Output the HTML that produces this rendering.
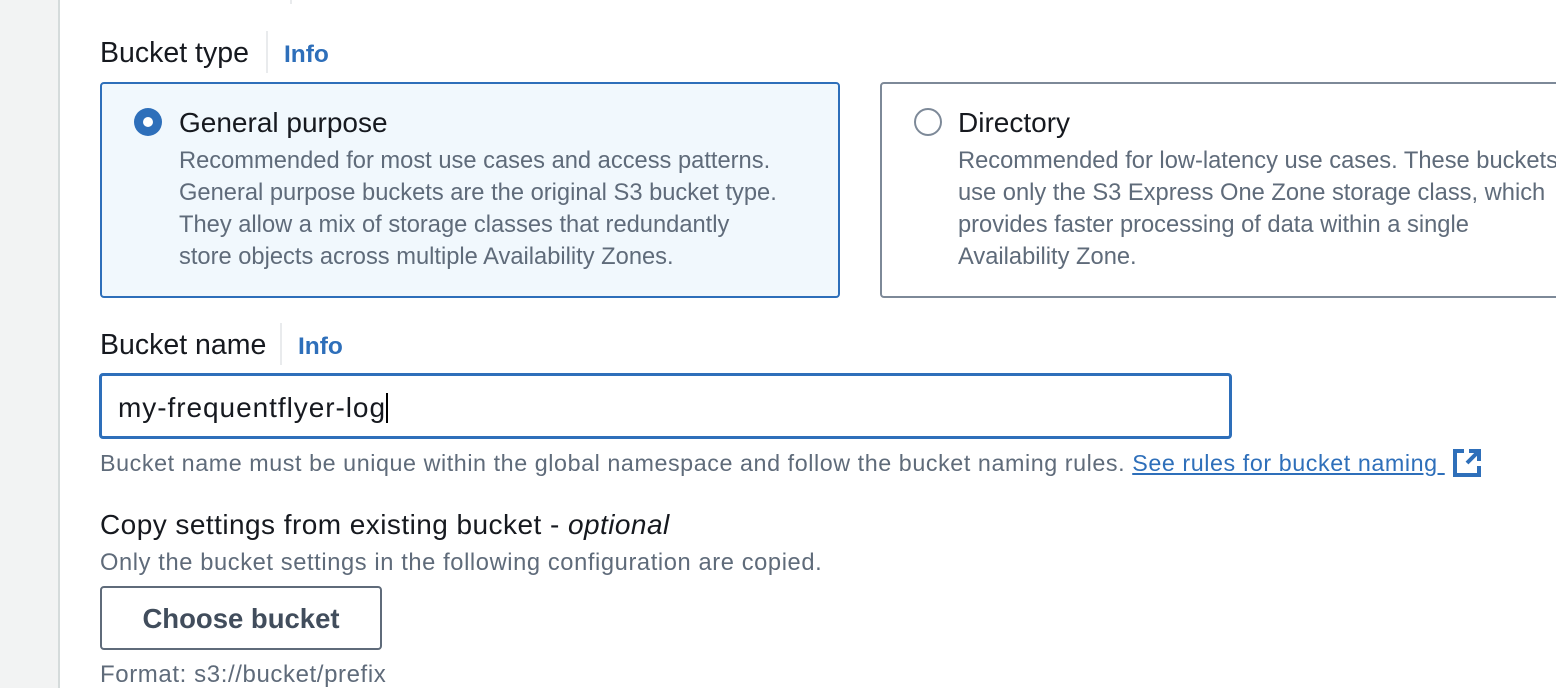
<!DOCTYPE html>
<html><head><style>
body{margin:0;width:1556px;height:688px;overflow:hidden;background:#fff;font-family:"Liberation Sans",sans-serif;position:relative}
.side{position:absolute;left:0;top:0;width:58px;height:688px;background:#f2f3f3;border-right:2px solid #d5dbdb}
.a{position:absolute;white-space:nowrap}
.h{font-size:28.5px;color:#16191f}
.info{font-size:24.5px;font-weight:bold;color:#2e6fba}
.sep{position:absolute;width:2px;background:#e9ebed}
.card{position:absolute;border-radius:4px;box-sizing:border-box}
.t{font-size:28px;color:#16191f}
.d{font-size:23.7px;color:#5f6b7a;line-height:32px}
</style></head><body>
<div class="side"></div>
<div class="a" style="left:290px;top:0;width:2px;height:4px;background:#e9ebed"></div>
<div class="a h" style="left:100px;top:37px">Bucket type</div>
<div class="sep" style="left:266px;top:31px;height:42px"></div>
<div class="a info" style="left:284px;top:41px">Info</div>
<div class="card" style="left:100px;top:82px;width:740px;height:216px;border:2px solid #2e6fba;background:#f1f8fd"></div>
<div class="a" style="left:134px;top:108px;width:28px;height:28px;border-radius:50%;background:#2e6fba"></div>
<div class="a" style="left:143px;top:117px;width:10px;height:10px;border-radius:50%;background:#fff"></div>
<div class="a t" style="left:179px;top:107px">General purpose</div>
<div class="a d" style="left:179px;top:145px">Recommended for most use cases and access patterns.<br>General purpose buckets are the original S3 bucket type.<br>They allow a mix of storage classes that redundantly<br>store objects across multiple Availability Zones.</div>
<div class="card" style="left:880px;top:82px;width:700px;height:216px;border:2px solid #7d8998;background:#fff"></div>
<div class="a" style="left:914px;top:108px;width:28px;height:28px;border-radius:50%;border:2px solid #7d8998;box-sizing:border-box"></div>
<div class="a t" style="left:958px;top:107px">Directory</div>
<div class="a d" style="left:958px;top:145px">Recommended for low-latency use cases. These buckets<br>use only the S3 Express One Zone storage class, which<br>provides faster processing of data within a single<br>Availability Zone.</div>
<div class="a h" style="left:100px;top:329px">Bucket name</div>
<div class="sep" style="left:280px;top:323px;height:42px"></div>
<div class="a info" style="left:298px;top:333px">Info</div>
<div class="card" style="left:99px;top:373px;width:1133px;height:66px;border:3px solid #2e6fba;background:#fff"></div>
<div class="a" style="left:118px;top:392px;font-size:28px;letter-spacing:0.95px;color:#16191f">my-frequentflyer-log<span style="display:inline-block;width:2px;height:30px;background:#000;vertical-align:-6px"></span></div>
<div class="a d" style="left:100px;top:447px;font-size:23.3px;letter-spacing:0.57px">Bucket name must be unique within the global namespace and follow the bucket naming rules. <span style="color:#2e6fba;text-decoration:underline">See rules for bucket naming&nbsp;</span></div>
<svg class="a" style="left:1452px;top:448px" width="30" height="30" viewBox="0 0 30 30"><path d="M12 3H3v24h24v-9" fill="none" stroke="#2e6fba" stroke-width="4"/><path d="M17 3h10v10M27 3L15 15" fill="none" stroke="#2e6fba" stroke-width="4"/></svg>
<div class="a" style="left:100px;top:509px;font-size:28px;color:#16191f;letter-spacing:0.45px">Copy settings from existing bucket - <i>optional</i></div>
<div class="a d" style="left:100px;top:547px;letter-spacing:0.6px">Only the bucket settings in the following configuration are copied.</div>
<div class="card" style="left:100px;top:586px;width:282px;height:64px;border:2px solid #5f6b7a;background:#fff"></div>
<div class="a" style="left:100px;top:603px;width:282px;text-align:center;font-size:27.5px;font-weight:bold;color:#414d5c">Choose bucket</div>
<div class="a d" style="left:100px;top:659px;font-size:24px;letter-spacing:0.6px">Format: s3://bucket/prefix</div>
</body></html>
